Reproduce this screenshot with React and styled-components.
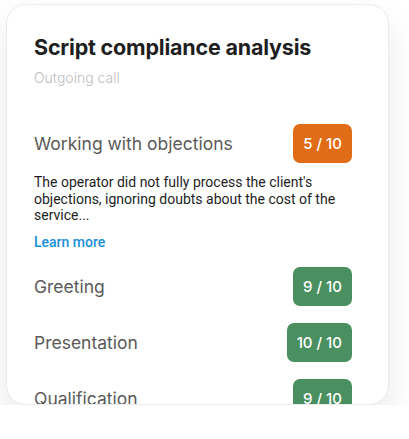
import React from "react";
import styled, { createGlobalStyle } from "styled-components";

const Global = createGlobalStyle`
  html, body { margin: 0; padding: 0; background: #ffffff; }
  body { font-family: Inter, "Noto Sans", sans-serif; }
`;

const Card = styled.div`
  box-sizing: border-box;
  margin: 4px 0 0 6px;
  width: 383px;
  height: 401px;
  border: 1px solid #ebebef;
  border-radius: 20px;
  background: #fff;
  box-shadow: 0 16px 32px rgba(0, 0, 0, 0.09);
  overflow: hidden;
  padding: 28px 36px 0 27px;
  display: flex;
  flex-direction: column;
`;

const Title = styled.h1`
  margin: 0;
  font-family: Inter, sans-serif;
  font-weight: 700;
  font-size: 21.5px;
  line-height: 28px;
  letter-spacing: -0.2px;
  color: #1f1f1f;
`;

const Subtitle = styled.div`
  margin-top: 8px;
  font-family: Inter, sans-serif;
  font-weight: 300;
  font-size: 14px;
  line-height: 18px;
  color: #bdbdbd;
`;

const List = styled.div`
  margin-top: 37px;
  display: flex;
  flex-direction: column;
`;

const Item = styled.div`
  display: flex;
  flex-direction: column;
  margin-bottom: 17px;
`;

const Row = styled.div`
  display: flex;
  align-items: center;
  justify-content: space-between;
`;

const Label = styled.span`
  font-family: Inter, sans-serif;
  font-size: 17.5px;
  font-weight: 400;
  color: #5a5a5a;
`;

const Badge = styled.span`
  box-sizing: border-box;
  height: 39px;
  min-width: 57px;
  padding: 0 10px;
  border-radius: 7px;
  display: flex;
  align-items: center;
  justify-content: center;
  font-family: Inter, sans-serif;
  font-weight: 500;
  font-size: 15px;
  color: #fff;
  background: ${(p) => (p.$bad ? "#e06c17" : "#4a8f5f")};
`;

const Description = styled.p`
  margin: 11px 0 0;
  font-family: Roboto, sans-serif;
  font-size: 14px;
  line-height: 16.6px;
  color: #1e1e1e;
`;

const More = styled.a`
  margin-top: 10px;
  font-family: Roboto, sans-serif;
  font-weight: 500;
  font-size: 14px;
  line-height: 16px;
  color: #1a8fd8;
  text-decoration: none;
  align-self: flex-start;
`;

const items = [
  {
    label: "Working with objections",
    score: "5 / 10",
    bad: true,
    text:
      "The operator did not fully process the client's objections, ignoring doubts about the cost of the service...",
  },
  { label: "Greeting", score: "9 / 10" },
  { label: "Presentation", score: "10 / 10" },
  { label: "Qualification", score: "9 / 10" },
];

export default function App() {
  return (
    <>
      <Global />
      <Card>
        <Title>Script compliance analysis</Title>
        <Subtitle>Outgoing call</Subtitle>
        <List>
          {items.map((it) => (
            <Item key={it.label}>
              <Row>
                <Label>{it.label}</Label>
                <Badge $bad={it.bad}>{it.score}</Badge>
              </Row>
              {it.text && (
                <>
                  <Description>{it.text}</Description>
                  <More href="#">Learn more</More>
                </>
              )}
            </Item>
          ))}
        </List>
      </Card>
    </>
  );
}
